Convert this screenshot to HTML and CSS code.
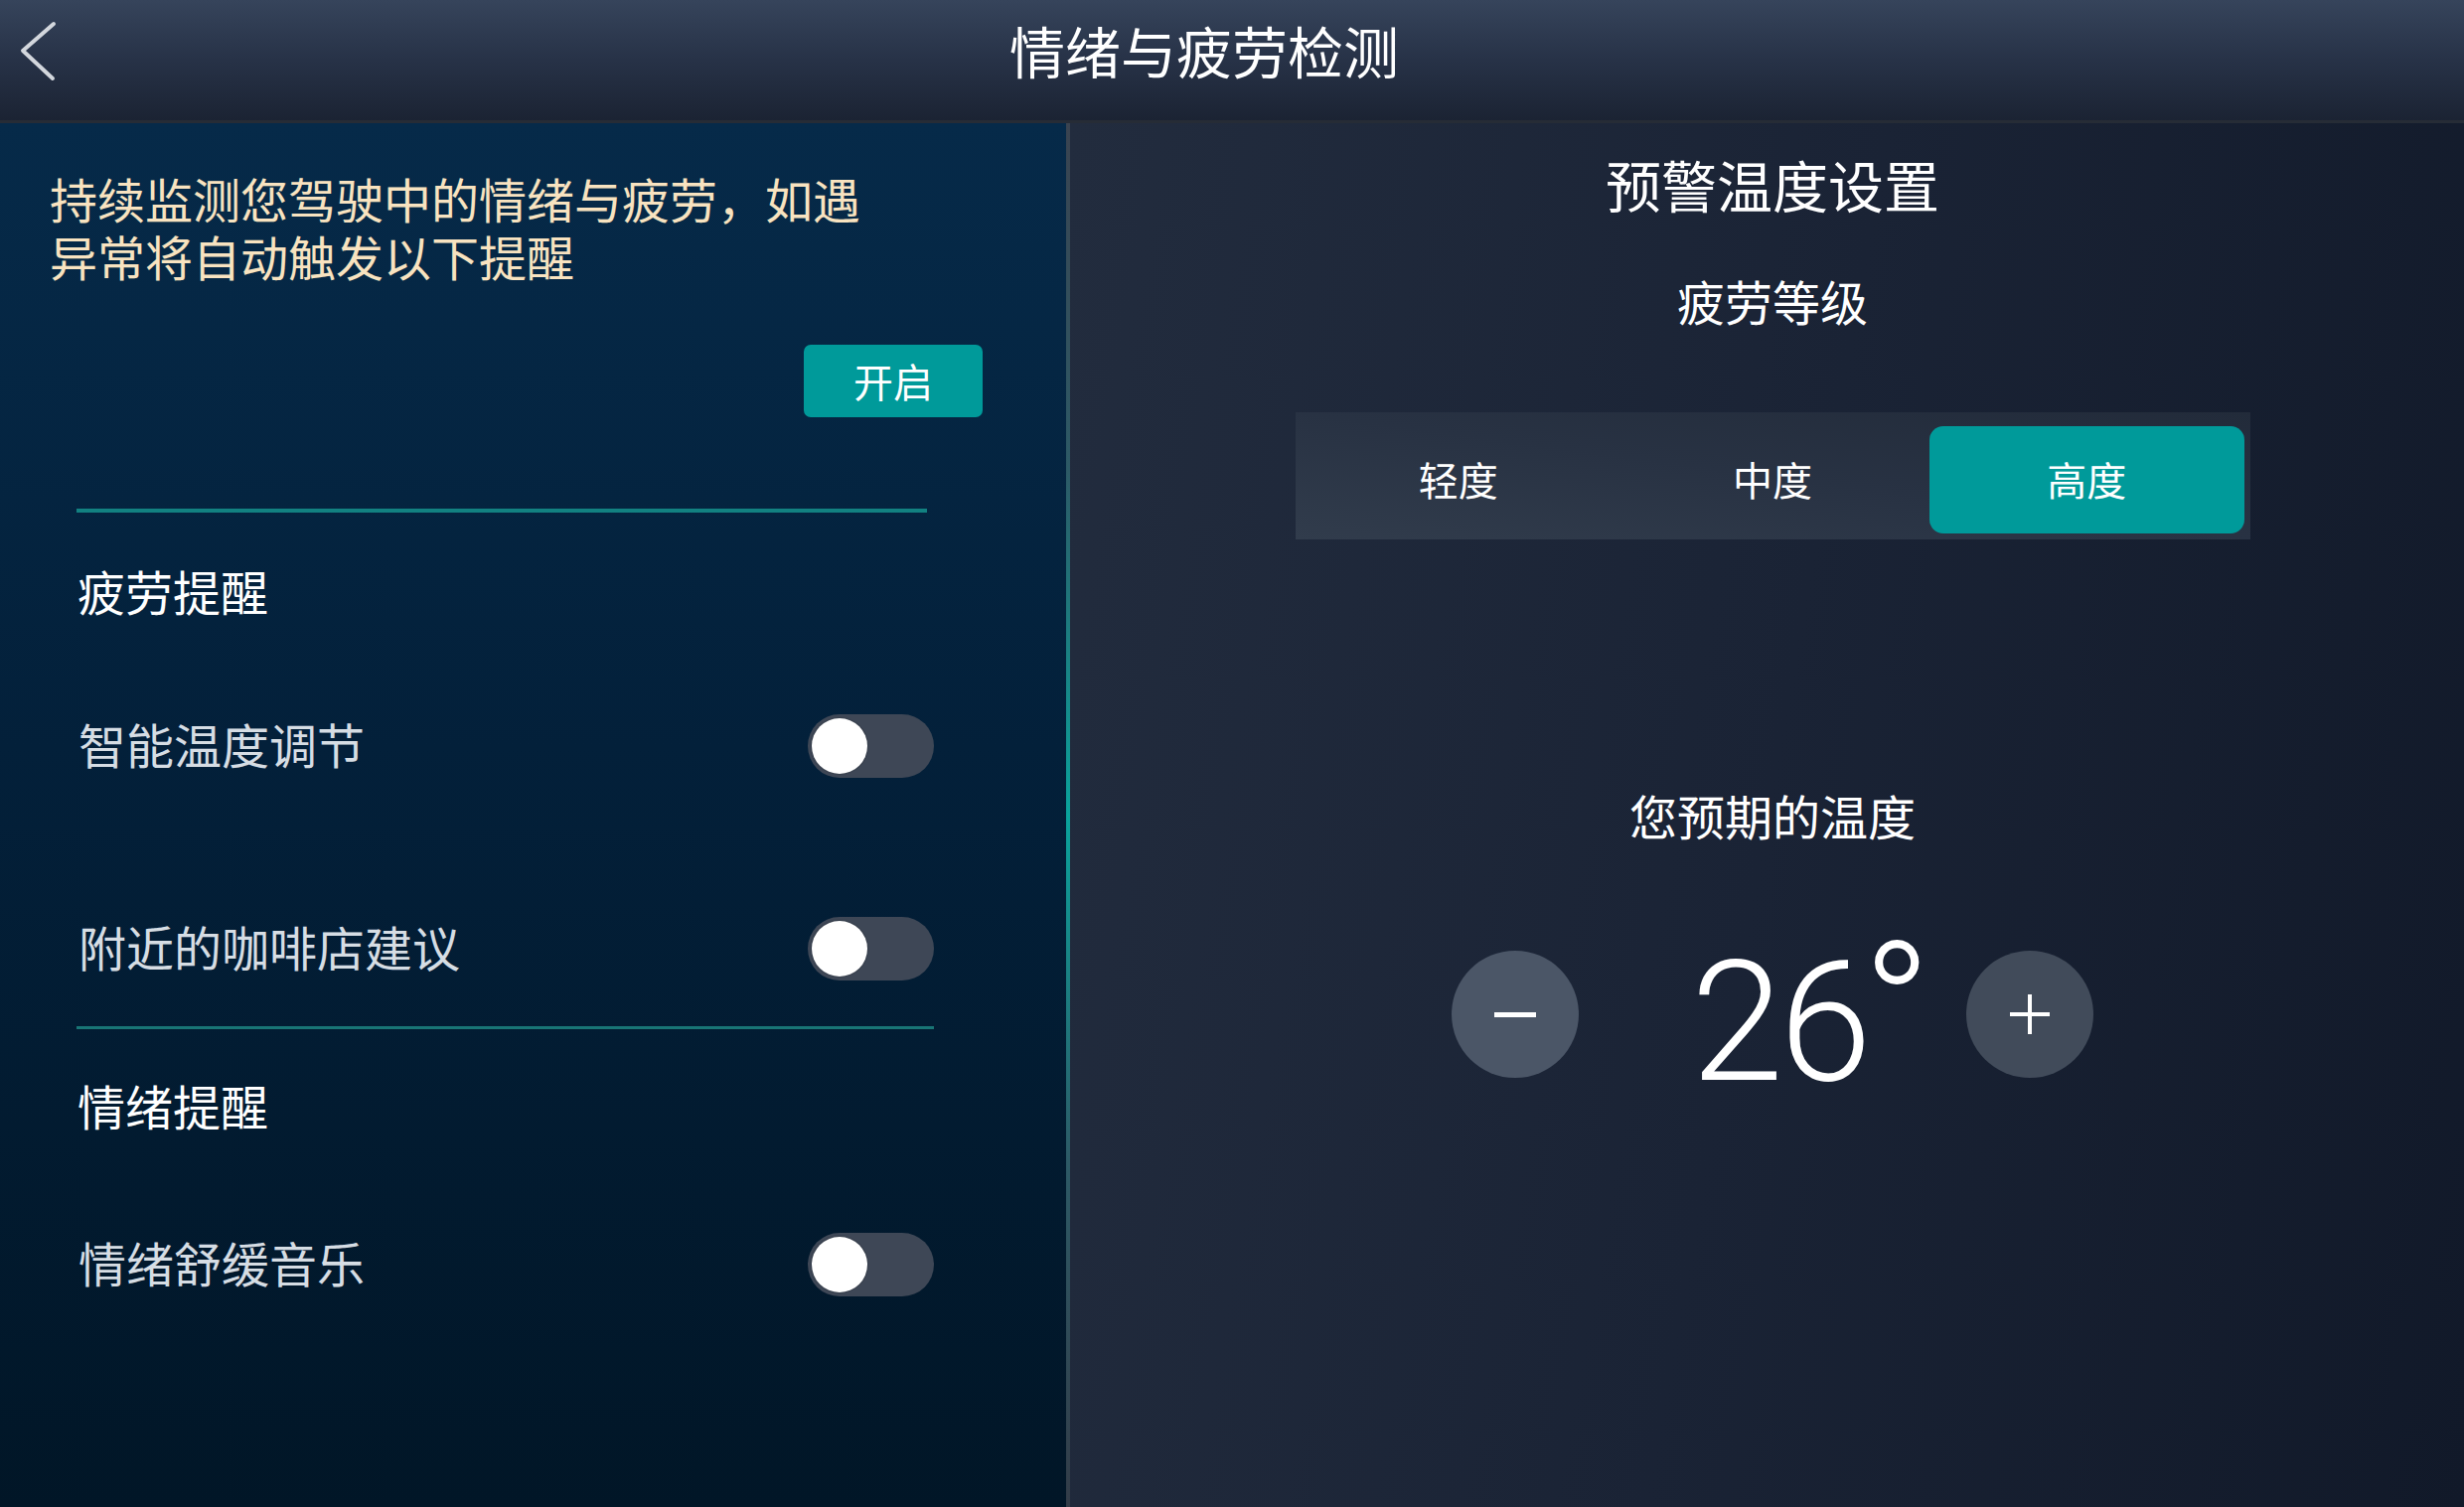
FILE: index.html
```html
<!DOCTYPE html>
<html lang="zh-CN">
<head>
<meta charset="utf-8">
<title>情绪与疲劳检测</title>
<link rel="stylesheet" href="styles.css">
</head>
<body>
<div class="app">
  <header class="topbar">
    <svg class="back" viewBox="0 0 70 66" width="70" height="66" aria-hidden="true">
      <polyline points="54,7 23,34 53,62" fill="none" stroke="#d3d7dd" stroke-width="4" stroke-linecap="round" stroke-linejoin="round"/>
    </svg>
    <h1 class="title">情绪与疲劳检测</h1>
  </header>
  <main class="main">
    <section class="left">
      <p class="desc">持续监测您驾驶中的情绪与疲劳，如遇异常将自动触发以下提醒</p>
      <div class="actions"><button class="btn-open">开启</button></div>
      <div class="content">
        <div class="divider thick"></div>
        <div class="section-title s1">疲劳提醒</div>
        <div class="row r1"><span class="label">智能温度调节</span><span class="toggle"><span class="knob"></span></span></div>
        <div class="row r2"><span class="label">附近的咖啡店建议</span><span class="toggle"><span class="knob"></span></span></div>
        <div class="divider thin"></div>
        <div class="section-title s2">情绪提醒</div>
        <div class="row r3"><span class="label">情绪舒缓音乐</span><span class="toggle"><span class="knob"></span></span></div>
      </div>
    </section>
    <div class="vline"></div>
    <section class="right">
      <h2 class="r-title">预警温度设置</h2>
      <div class="r-sub">疲劳等级</div>
      <div class="segmented">
        <div class="seg">轻度</div>
        <div class="seg">中度</div>
        <div class="seg active">高度</div>
      </div>
      <div class="r-label">您预期的温度</div>
      <div class="temp-row">
        <button class="circle minus" aria-label="减"><span class="bar-h"></span></button>
        <div class="temp"><span class="num">26</span><span class="deg">°</span></div>
        <button class="circle plus" aria-label="加"><span class="bar-h"></span><span class="bar-v"></span></button>
      </div>
    </section>
  </main>
</div>
</body>
</html>
```
FILE: styles.css
```css
* { box-sizing: border-box; }
html, body { margin: 0; padding: 0; }
body {
  width: 2480px;
  height: 1517px;
  overflow: hidden;
  background: #0d1522;
  font-family: "Noto Sans CJK SC", "Noto Sans", sans-serif;
  color: #fff;
}
.app { width: 2480px; height: 1517px; display: flex; flex-direction: column; }

.topbar {
  height: 124px;
  flex: none;
  display: flex;
  align-items: flex-start;
  padding-top: 17px;
  background: linear-gradient(to bottom, #36445b 0%, #273247 50%, #1b2333 100%);
  border-bottom: 3px solid #262c36;
}
.back { flex: none; display: block; }
.title {
  flex: 1;
  margin: 0;
  padding-right: 126px;
  text-align: center;
  font-size: 56px;
  line-height: 66px;
  font-weight: 400;
  color: #ffffff;
}

.main { flex: 1; display: flex; min-height: 0; }

.left {
  width: 1073px;
  flex: none;
  padding-top: 46px;
  background: linear-gradient(to bottom, #062a49 0%, #03203a 45%, #011627 100%);
}
.desc {
  margin: 0 0 0 50px;
  width: 840px;
  font-size: 48px;
  line-height: 58px;
  color: #f8e3c0;
}
.actions {
  display: flex;
  justify-content: flex-end;
  padding-right: 84px;
  margin-top: 61px;
}
.btn-open {
  width: 180px;
  height: 73px;
  border: 0;
  border-radius: 7px;
  background: #009a9a;
  color: #fff;
  font-family: inherit;
  font-size: 40px;
  line-height: 73px;
  padding: 0;
}
.content { padding: 0 133px 0 77px; }
.divider { background: #128181; }
.divider.thick { height: 4px; width: 856px; margin-top: 92px; }
.divider.thin { height: 3px; margin-top: 46px; background: #187575; }
.section-title {
  height: 58px;
  font-size: 48px;
  line-height: 58px;
  color: #ffffff;
  padding-left: 1px;
}
.s1 { margin-top: 49px; }
.s2 { margin-top: 47px; }
.row {
  height: 64px;
  display: flex;
  align-items: center;
  justify-content: space-between;
}
.r1 { margin-top: 96px; }
.r2 { margin-top: 140px; }
.r3 { margin-top: 100px; }
.label { font-size: 48px; line-height: 58px; color: #d6dde4; padding-left: 2px; padding-bottom: 6px; }
.toggle {
  width: 127px;
  height: 64px;
  border-radius: 32px;
  background: #3e4756;
  padding: 4px;
  display: flex;
}
.knob {
  width: 56px;
  height: 56px;
  border-radius: 50%;
  background: #ffffff;
  box-shadow: 0 0 2px rgba(0,0,0,0.35);
}

.vline {
  width: 4px;
  flex: none;
  background: linear-gradient(to bottom, #3a4350 0%, #2d5a66 25%, #0aa39c 50%, #2d5a66 75%, #333c48 100%);
}

.right {
  flex: 1;
  padding-left: 11px;
  padding-top: 28px;
  display: flex;
  flex-direction: column;
  align-items: center;
  background: linear-gradient(100deg, #222c3e 0%, #1a2335 50%, #111929 100%);
}
.r-title {
  margin: 0;
  font-size: 56px;
  line-height: 66px;
  font-weight: 400;
  color: #fff;
}
.r-sub {
  margin-top: 55px;
  font-size: 48px;
  line-height: 58px;
  color: #fff;
}
.segmented {
  margin-top: 84px;
  width: 961px;
  height: 128px;
  padding: 14px 6px 6px 6px;
  display: grid;
  grid-template-columns: 1fr 1fr 1fr;
  background: linear-gradient(to top right, #313c4c 0%, #283243 50%, #222b3a 100%);
}
.seg {
  display: flex;
  align-items: center;
  justify-content: center;
  font-size: 40px;
  color: #fff;
  border-radius: 14px;
  padding-bottom: 2px;
}
.seg.active { background: #009a9a; }
.r-label {
  margin-top: 248px;
  font-size: 48px;
  line-height: 58px;
  color: #fff;
}
.temp-row {
  margin-top: 108px;
  display: flex;
  align-items: center;
}
.circle {
  width: 128px;
  height: 128px;
  border-radius: 50%;
  border: 0;
  padding: 0;
  position: relative;
  display: flex;
  align-items: center;
  justify-content: center;
}
.minus { background: #4b5667; }
.plus { background: #414b5a; }
.bar-h { display: block; width: 42px; height: 5px; background: #fff; }
.plus .bar-h { width: 40px; height: 4px; }
.bar-v { position: absolute; width: 4px; height: 40px; background: #fff; left: 62px; top: 44px; }
.temp {
  margin-left: 113px;
  margin-right: 35px;
  padding-top: 9px;
  display: flex;
  align-items: flex-start;
  font-family: Roboto, "Open Sans", sans-serif;
  font-weight: 300;
  color: #fff;
  height: 128px;
}
.num { font-size: 168px; line-height: 128px; letter-spacing: -4px; }
.deg { font-size: 186px; line-height: 128px; margin-top: -14px; margin-left: -6px; }
```
